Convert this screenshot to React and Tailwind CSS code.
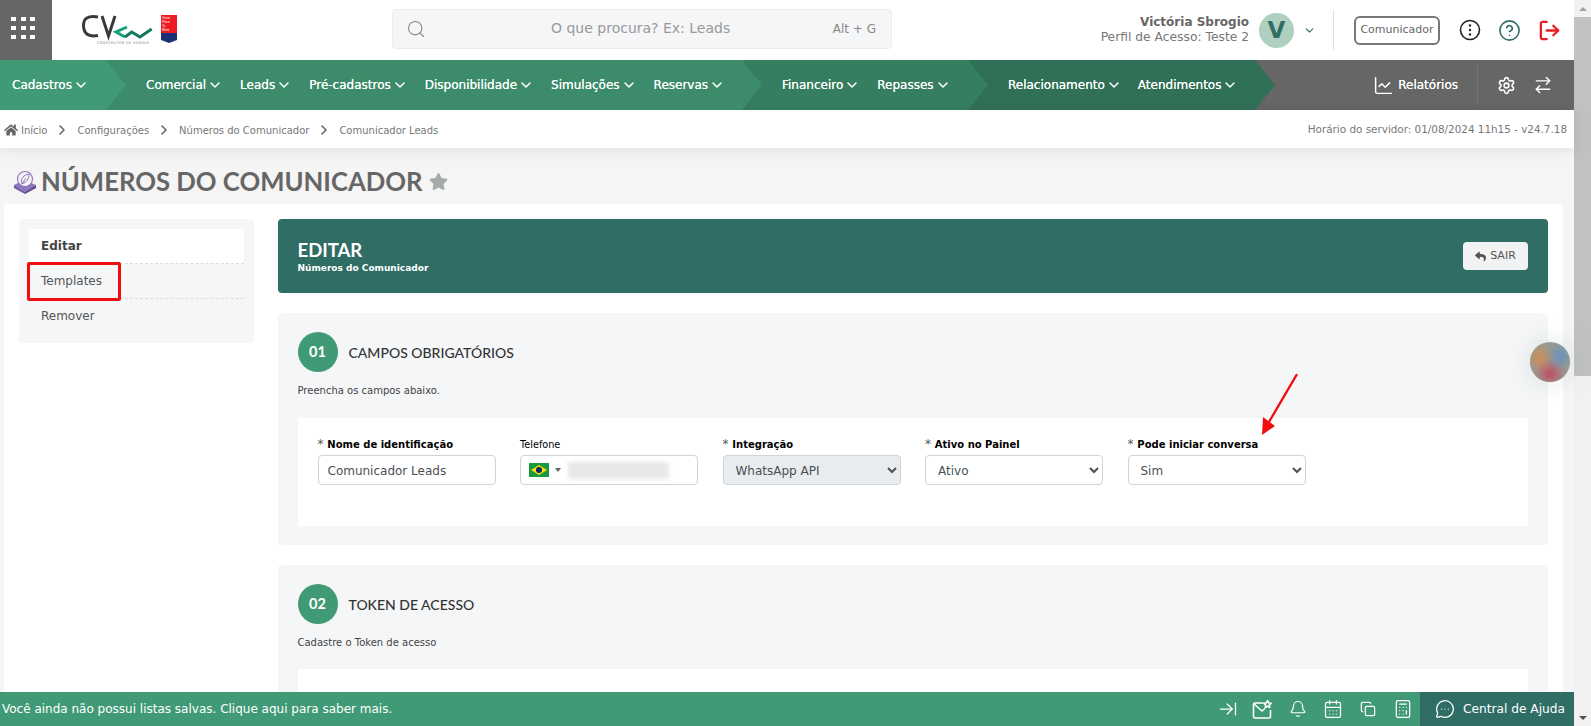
import React from "react";
import {
  ChevronDown, ChevronRight, Search, CircleHelp, LogOut, ChartLine, Settings, ArrowRightLeft,
  ArrowRightToLine, Bell, CalendarDays, Copy, Calculator, MessageCircleMore,
} from "lucide-react";
import { FaHome, FaStar, FaReply } from "react-icons/fa";

const sans = "font-['DejaVu_Sans',sans-serif]";
const lato = "font-['Lato',sans-serif]";

const NavItem = ({ label }) => (
  <a className="flex items-center gap-px text-white text-[12px] [text-shadow:0_0_0.4px_#fff] whitespace-nowrap">
    {label}
    <ChevronDown size={16} strokeWidth={2.2} />
  </a>
);

const Logo = () => (
  <svg width="100" height="34" viewBox="0 0 100 34" className="block">
    <path d="M17 3 Q2 0.5 2.5 12 Q3 24 17 21.5" fill="none" stroke="#3a3a3a" strokeWidth="3" />
    <path d="M21 2 L27.5 22 L34 2" fill="none" stroke="#3a3a3a" strokeWidth="3" />
    <path d="M46 13 L35 18 L44 23" fill="none" stroke="#17a07c" strokeWidth="3" />
    <path d="M44 23 L50.7 18 L59 23 L70.7 15" fill="none" stroke="#14785f" strokeWidth="3" />
    <text x="16" y="29.5" fontSize="3.6" fill="#888" fontFamily="DejaVu Sans" letterSpacing="0.25">CONSTRUTOR DE VENDAS</text>
    <path d="M80 1 H96 V19 H80 Z" fill="#ed1c24" />
    <path d="M80 19 H96 V26 L88 29 L80 26 Z" fill="#1c2f74" />
    <text x="81" y="5" fontSize="3.2" fill="#fff" fontFamily="Liberation Sans">Great</text>
    <text x="81" y="9" fontSize="3.2" fill="#fff" fontFamily="Liberation Sans">Place</text>
    <text x="81" y="13" fontSize="3.2" fill="#fff" fontFamily="Liberation Sans">To</text>
    <text x="81" y="17" fontSize="3.2" fill="#fff" fontFamily="Liberation Sans">Work</text>
  </svg>
);

const TitleIcon = () => (
  <svg width="24" height="24" viewBox="0 0 24 24" className="shrink-0">
    <path d="M1 15 L11 10 L23 15 L12 22 Z" fill="#8d76bd" />
    <path d="M1 15 L12 22 L12 24 L1 18 Z" fill="#6f55a5" />
    <path d="M23 15 L12 22 L12 24 L23 18 Z" fill="#5d4592" />
    <circle cx="12" cy="9" r="7.5" fill="#f4f4f4" stroke="#8d76bd" strokeWidth="1.1" />
    <path d="M9 14 C7 8 11 5 16 4 C16 9 14 12 9 14 Z M9 14 L13 8" fill="none" stroke="#8d76bd" strokeWidth="1" />
  </svg>
);

const MailStar = () => (
  <svg width="21" height="21" viewBox="0 0 21 21" fill="none" stroke="#fff" strokeWidth="1.6" strokeLinejoin="round">
    <path d="M11 4 H3 Q1.5 4 1.5 5.5 V17.5 Q1.5 19 3 19 H17 Q18.5 19 18.5 17.5 V11" />
    <path d="M2 5 L10 12 L13 9.5" />
    <path d="M15.5 1.5 L16.6 3.9 L19.2 4.2 L17.3 6 L17.8 8.5 L15.5 7.2 L13.2 8.5 L13.7 6 L11.8 4.2 L14.4 3.9 Z" />
  </svg>
);

const Field = ({ label, required, children }) => (
  <div className="w-[178px] shrink-0">
    <label className={`block h-[19px] leading-[17px] text-black ${required ? "text-[10px] font-bold" : "text-[9.7px]"}`}>
      {required && <span className="font-normal text-[12px] text-[#555]">* </span>}
      {label}
    </label>
    {children}
  </div>
);

const selectCls =
  "w-full h-[30px] pl-2 pr-1 pt-[2px] rounded-[4px] border border-[#ced4da] text-[12px] text-[#495057]";

const SectionHead = ({ num, title, desc }) => (
  <>
    <div className="flex items-center gap-[11px]">
      <div className={`w-10 h-10 rounded-full bg-[#409a75] flex items-center justify-center text-white text-[14.5px] font-bold ${lato}`}>
        {num}
      </div>
      <h3 className={`text-[14px] font-medium text-[#333] ${lato}`}>{title}</h3>
    </div>
    <p className="mt-[12px] text-[10px] leading-[14px] text-[#444]">{desc}</p>
  </>
);

export default function App() {
  return (
    <div className={`relative w-[1591px] h-[726px] overflow-hidden flex bg-[#f5f5f5] ${sans}`}>
      <div className="w-[1574px] h-full flex flex-col">
        {/* top header */}
        <header className="h-[60px] bg-white flex items-center shrink-0">
          <div className="w-[52px] h-full bg-[#666] pl-[11px] pt-[17px]">
            <div className="grid grid-cols-[5px_5px_5px] gap-x-[4.5px] gap-y-[5px]">
              {Array.from({ length: 9 }).map((_, i) => (
                <span key={i} className="h-[4px] bg-white" />
              ))}
            </div>
          </div>
          <div className="w-[340px] pl-[29px] pt-[2px]">
            <Logo />
          </div>
          <div className="w-[500px] h-10 -mt-[3px] bg-[#f5f6f8] border border-[#ececec] rounded-[4px] flex items-center pl-[13px] pr-[15px]">
            <Search size={20} strokeWidth={1.3} className="text-[#888]" />
            <span className="ml-[125px] text-[14px] text-[#999]">O que procura? Ex: Leads</span>
            <span className="ml-auto text-[12px] text-[#888]">Alt + G</span>
          </div>
          <div className="flex-1 flex items-center justify-end pr-[13px]">
            <div className="text-right leading-[15px]">
              <div className="font-bold text-[12px] text-[#666]">Victória Sbrogio</div>
              <div className="text-[12.3px] text-[#777]">Perfil de Acesso: Teste 2</div>
            </div>
            <div className="ml-[10px] w-[35px] h-[35px] rounded-full bg-[#aed0bf] flex items-center justify-center text-[#2f6d65] text-[23px] font-bold">
              V
            </div>
            <ChevronDown size={13} className="ml-[9px] text-[#2f6d65]" />
            <div className="ml-[17px] w-px h-10 bg-[#ddd]" />
            <div className="ml-[20px] w-[86px] h-[29px] rounded-[6px] border-2 border-[#777] flex items-center justify-center text-[11px] text-[#666]">
              Comunicador
            </div>
            <svg width="22" height="22" viewBox="0 0 22 22" className="ml-[19px]" fill="none">
              <circle cx="11" cy="11" r="9.5" stroke="#222" strokeWidth="1.6" />
              <circle cx="11" cy="6.5" r="1.2" fill="#222" />
              <circle cx="11" cy="11" r="1.2" fill="#222" />
              <circle cx="11" cy="15.5" r="1.2" fill="#222" />
            </svg>
            <CircleHelp size={23} strokeWidth={1.7} className="ml-[17px] text-[#2f6d65]" />
            <LogOut size={23} strokeWidth={2.4} className="ml-[17px] text-[#ea1c24]" />
          </div>
        </header>

        {/* main nav */}
        <nav className="h-[50px] bg-[#666] flex shrink-0">
          <div className="relative z-30 w-[126px] pl-3 flex items-center bg-[#409a75] [clip-path:polygon(0_0,calc(100%-20px)_0,100%_50%,calc(100%-20px)_100%,0_100%)]">
            <NavItem label="Cadastros" />
          </div>
          <div className="relative z-20 -ml-[20px] w-[656px] pl-[40px] flex items-center gap-[17px] bg-[#3c8c6b] [clip-path:polygon(0_0,calc(100%-20px)_0,100%_50%,calc(100%-20px)_100%,0_100%)]">
            <NavItem label="Comercial" />
            <NavItem label="Leads" />
            <NavItem label="Pré-cadastros" />
            <NavItem label="Disponibilidade" />
            <NavItem label="Simulações" />
            <NavItem label="Reservas" />
          </div>
          <div className="relative z-10 -ml-[20px] w-[246px] pl-[40px] flex items-center gap-[17px] bg-[#367e60] [clip-path:polygon(0_0,calc(100%-20px)_0,100%_50%,calc(100%-20px)_100%,0_100%)]">
            <NavItem label="Financeiro" />
            <NavItem label="Repasses" />
          </div>
          <div className="-ml-[20px] w-[307px] pl-[40px] flex items-center gap-4 bg-[#307056] [clip-path:polygon(0_0,calc(100%-20px)_0,100%_50%,calc(100%-20px)_100%,0_100%)]">
            <NavItem label="Relacionamento" />
            <NavItem label="Atendimentos" />
          </div>
          <div className="flex-1 flex items-center justify-end text-white pr-[21px]">
            <ChartLine size={21} strokeWidth={1.7} />
            <span className="ml-[4px] text-[12px] [text-shadow:0_0_0.4px_#fff]">Relatórios</span>
            <div className="ml-[19px] w-px h-10 bg-[#777]" />
            <Settings size={19} strokeWidth={2} className="ml-[19px]" />
            <ArrowRightLeft size={20} strokeWidth={1.7} className="ml-[17px]" />
          </div>
        </nav>

        {/* breadcrumb */}
        <div className="relative z-10 h-[38px] bg-white flex items-center pt-[2px] pl-[4px] pr-[7px] text-[10px] text-[#777] shadow-[0_2px_14px_rgba(0,0,0,0.09)] shrink-0">
          <FaHome size={14} className="text-[#666]" />
          <span className="ml-[3px]">Início</span>
          <ChevronRight size={16} strokeWidth={2.4} className="mx-[7px] text-[#666]" />
          <span>Configurações</span>
          <ChevronRight size={16} strokeWidth={2.4} className="mx-[7px] text-[#666]" />
          <span>Números do Comunicador</span>
          <ChevronRight size={16} strokeWidth={2.4} className="mx-[7px] text-[#666]" />
          <span>Comunicador Leads</span>
          <span className="ml-auto text-[10.4px]">Horário do servidor: 01/08/2024 11h15 - v24.7.18</span>
        </div>

        {/* page body */}
        <main className="flex-1 min-h-0 overflow-hidden">
          <div className="h-[56px] pl-[13px] pt-[11px] flex items-center gap-[4px]">
            <TitleIcon />
            <h1 className={`text-[25.7px] leading-none font-bold text-[#666] ${lato}`}>NÚMEROS DO COMUNICADOR</h1>
            <FaStar size={19} className="ml-[2px] text-[#a5aaaa]" />
          </div>
          <div className="ml-[4px] w-[1559px] h-[600px] bg-white rounded-t-[4px] pt-[15px] pl-[15px] pr-[15px] flex items-start gap-[23.5px]">
            {/* side menu */}
            <aside className="relative w-[235px] shrink-0 bg-[#f5f6f8] rounded-[4px] p-[10px] pb-[9.5px] text-[12px] text-[#555]">
              <div className="h-[35px] pl-3 flex items-center bg-white font-bold text-[#444] border-b border-dashed border-[#ddd]">Editar</div>
              <div className="relative h-[35px] pl-3 flex items-center border-b border-dashed border-[#ddd]">
                Templates
                <span className="absolute -left-[2px] -top-[2px] w-[94px] h-[39px] border-[3px] border-[#f00d0d] rounded-[2px]" />
              </div>
              <div className="h-[34px] pl-3 flex items-center">Remover</div>
            </aside>

            <div className="flex-1 min-w-0">
              <div className="h-[74px] bg-[#2f6d65] rounded-[4px] flex items-center justify-between pl-5 pr-5 text-white">
                <div className="pt-[3px]">
                  <h2 className={`text-[18.5px] leading-[19px] font-bold ${lato}`}>EDITAR</h2>
                  <p className="mt-[3px] text-[9px] leading-[11px] font-bold">Números do Comunicador</p>
                </div>
                <button className="w-[65px] h-[28px] rounded-[4px] bg-[#f1f2f3] flex items-center justify-center gap-[4px] text-[11px] text-[#555]">
                  <FaReply size={11} />
                  SAIR
                </button>
              </div>

              <section className="mt-5 h-[232px] bg-[#f5f6f8] rounded-[4px] pt-[19px] px-5">
                <SectionHead num="01" title="CAMPOS OBRIGATÓRIOS" desc="Preencha os campos abaixo." />
                <div className="mt-[20px] h-[108px] bg-white pt-[18px] px-5 flex gap-[24.5px]">
                  <Field label="Nome de identificação" required>
                    <input
                      className="w-full h-[30px] pl-[9px] pr-2 pt-[2px] rounded-[4px] border border-[#ced4da] text-[12px] text-[#495057]"
                      defaultValue="Comunicador Leads"
                    />
                  </Field>
                  <Field label="Telefone">
                    <div className="h-[30px] rounded-[4px] border border-[#ced4da] flex items-center pl-2">
                      <svg width="20" height="14" viewBox="0 0 20 14">
                        <rect width="20" height="14" fill="#169b3e" />
                        <path d="M10 2 L18 7 L10 12 L2 7 Z" fill="#fedf00" />
                        <circle cx="10" cy="7" r="3" fill="#002776" />
                      </svg>
                      <span className="ml-[6px] w-0 h-0 border-x-[3px] border-x-transparent border-t-[4px] border-t-[#666]" />
                      <span className="ml-[7px] w-[101px] h-[17px] bg-[#e8e8e8] blur-[2px]" />
                    </div>
                  </Field>
                  <Field label="Integração" required>
                    <select className={`${selectCls} bg-[#e9ecef]`} defaultValue="w">
                      <option value="w">WhatsApp API</option>
                    </select>
                  </Field>
                  <Field label="Ativo no Painel" required>
                    <select className={`${selectCls} bg-white`} defaultValue="a">
                      <option value="a">Ativo</option>
                    </select>
                  </Field>
                  <Field label="Pode iniciar conversa" required>
                    <select className={`${selectCls} bg-white`} defaultValue="s">
                      <option value="s">Sim</option>
                    </select>
                  </Field>
                </div>
              </section>

              <section className="mt-5 h-[300px] bg-[#f5f6f8] rounded-[4px] pt-[19px] px-5">
                <SectionHead num="02" title="TOKEN DE ACESSO" desc="Cadastre o Token de acesso" />
                <div className="mt-[19px] h-[107px] bg-white" />
              </section>
            </div>
          </div>
        </main>

        {/* bottom bar */}
        <footer className="h-[34px] bg-[#409a75] flex items-center text-white shrink-0">
          <span className="pl-[2px] text-[12px]">Você ainda não possui listas salvas. Clique aqui para saber mais.</span>
          <div className="ml-auto flex items-center">
            <span className="w-[35px] flex justify-center"><ArrowRightToLine size={20} strokeWidth={1.5} /></span>
            <span className="w-[35px] flex justify-center"><MailStar /></span>
            <span className="w-[35px] flex justify-center"><Bell size={18} strokeWidth={1.6} /></span>
            <span className="w-[35px] flex justify-center"><CalendarDays size={20} strokeWidth={1.5} /></span>
            <span className="w-[35px] flex justify-center"><Copy size={16} strokeWidth={1.8} /></span>
            <span className="w-[35px] flex justify-center"><Calculator size={20} strokeWidth={1.5} /></span>
          </div>
          <div className="w-[154px] h-full bg-[#2f6d65] flex items-center pl-[15px] gap-[8px] text-[12.2px]">
            <MessageCircleMore size={20} strokeWidth={1.5} />
            Central de Ajuda
          </div>
        </footer>
      </div>

      {/* scrollbar */}
      <div className="w-[17px] h-full bg-[#f1f1f1] flex flex-col shrink-0">
        <div className="h-[17px] flex items-center justify-center">
          <span className="w-0 h-0 border-x-[4px] border-x-transparent border-b-[4px] border-b-[#a3a3a3]" />
        </div>
        <div className="h-[359px] bg-[#c1c1c1]" />
        <div className="mt-auto h-[17px] flex items-center justify-center">
          <span className="w-0 h-0 border-x-[4px] border-x-transparent border-t-[4px] border-t-[#505050]" />
        </div>
      </div>

      {/* floating chat bubble */}
      <div className="absolute left-[1530px] top-[342px] w-10 h-10 rounded-full overflow-hidden bg-[#9a9a90] shadow-[0_0_24px_rgba(120,160,140,0.25)]">
        <div className="w-full h-full blur-[3px] bg-[radial-gradient(circle_at_25%_40%,#d98a4a_0,transparent_35%),radial-gradient(circle_at_75%_35%,#5f93c9_0,transparent_35%),radial-gradient(circle_at_50%_80%,#c2405a_0,transparent_40%)]" />
      </div>

      {/* annotation arrow */}
      <svg width="50" height="70" viewBox="0 0 50 70" className="absolute left-[1255px] top-[370px]">
        <path d="M41.5 5 L14 52" stroke="#f00d0d" strokeWidth="2.4" strokeLinecap="round" />
        <path d="M7 65 L8 47 L20 56 Z" fill="#f00d0d" />
      </svg>
    </div>
  );
}
